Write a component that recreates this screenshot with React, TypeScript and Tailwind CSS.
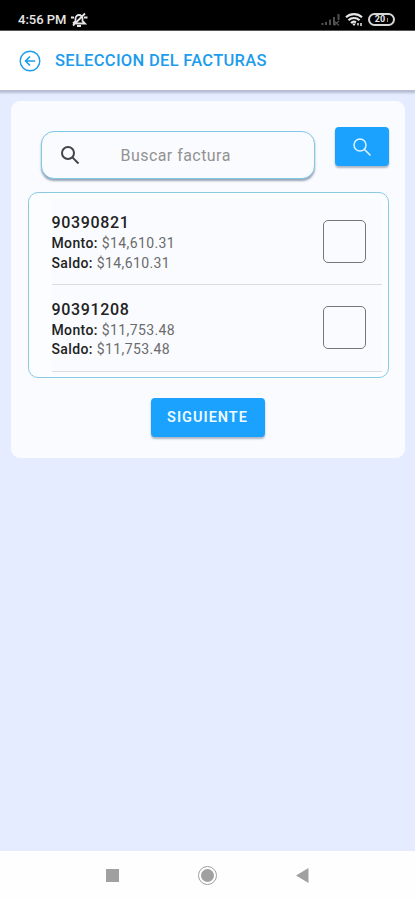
import { useState } from "react";

const invoices = [
  { id: "90390821", monto: "$14,610.31", saldo: "$14,610.31" },
  { id: "90391208", monto: "$11,753.48", saldo: "$11,753.48" },
];

function StatusBar() {
  return (
    <div className="flex h-[31px] shrink-0 items-center justify-between border-b border-[#555] bg-black pt-[9px] pr-[20px] pl-[18px] text-[#e6e6e6]">
      <div className="flex items-center gap-[3px]">
        <span className="text-[13px] leading-none font-medium whitespace-nowrap">4:56 PM</span>
        <svg width="18" height="16" viewBox="0 0 18 16" fill="none" stroke="currentColor" strokeWidth="1.8">
          <path d="M3 11.5 5.5 9V6.5a3.5 3.5 0 0 1 7 0V9l2.500 2.500H6" />
          <path d="M7 14h4M3 13.500 15 1.500M1 5.500h3M14 5.500h3.500" />
        </svg>
      </div>
      <div className="flex items-center">
        <svg width="19" height="14" viewBox="0 0 19 14" fill="none" stroke="#505050" strokeWidth="2">
          <path d="M1.5 10v2M5 9v3M9 6.5V12M13 4v8M17.5 1v6" />
          <path d="m13 8 5 4.5m0-4.5-5 4.5" strokeWidth="1.3" />
        </svg>
        <svg className="ml-[5px]" width="18" height="15" viewBox="0 0 18 15" fill="none" stroke="currentColor" strokeWidth="2.2">
          <path d="M1 5.2a12 12 0 0 1 16 0M3.5 8.2a8 8 0 0 1 11 0M6 11a4.5 4.5 0 0 1 5-.8" />
          <path d="m9 14-2-2.5h4z" fill="currentColor" stroke="none" />
          <path d="M13 13.5V11M16 11v3" strokeWidth="1.5" />
        </svg>
        <div className="ml-[5px] flex h-[13px] w-[27px] items-center justify-center rounded-full border-2 border-[#d6d6d6]">
          <span className="pr-[2px] text-[9px] leading-none font-bold">20</span>
          <span className="h-[4px] w-px bg-[#8a8a8a]" />
        </div>
      </div>
    </div>
  );
}

function SearchIcon({ className }: { className?: string }) {
  return (
    <svg className={className} width="20" height="20" viewBox="0 0 20 20" fill="none" stroke="currentColor">
      <circle cx="8" cy="8" r="6" />
      <path d="m12.4 12.4 6.1 6.1" />
    </svg>
  );
}

export default function App() {
  const [query, setQuery] = useState("");
  const [selected, setSelected] = useState<string[]>([]);

  const toggle = (id: string) => {
    setSelected((prev) =>
      prev.includes(id) ? prev.filter((item) => item !== id) : [...prev, id]
    );
  };

  return (
    <div className="flex h-[900px] w-[415px] flex-col overflow-hidden bg-[#e5ecff] font-[Roboto,sans-serif]">
      <StatusBar />

      <header className="flex h-[59px] shrink-0 items-center bg-white pl-[19px] text-[#1c9cee] shadow-[0_2px_2px_1px_rgba(110,120,145,0.4)]">
        <svg width="22" height="22" viewBox="0 0 22 22" fill="none" stroke="currentColor" strokeWidth="1.4" strokeLinecap="round" strokeLinejoin="round">
          <circle cx="11" cy="11" r="9.8" />
          <path d="M10.5 7 6.5 11l4 4M6.7 11h8.8" strokeWidth="1.7" />
        </svg>
        <h1 className="ml-[14px] pt-[2px] text-[16.5px] font-medium tracking-[0.3px] whitespace-nowrap">
          SELECCION DEL FACTURAS
        </h1>
      </header>

      <main className="flex-1 px-[10.5px] pt-[11px]">
        <div className="flex h-[357px] flex-col rounded-[9px] bg-[#fafbff] pr-[16px] pl-[17px]">
          <div className="flex justify-between pt-[26px] pl-[13px]">
            <label className="mt-[4px] flex h-[48px] w-[274px] items-center rounded-[13px] border border-[#80c8e4] bg-[#fafbff] pl-[18px] shadow-[0_2px_2px_rgba(75,95,130,0.55)]">
              <SearchIcon className="stroke-2 text-[#444]" />
              <input
                type="text"
                value={query}
                onChange={(e) => setQuery(e.target.value)}
                placeholder="Buscar factura"
                className="ml-[41px] w-[150px] pt-px text-[16px] tracking-[0.45px] text-[#444] outline-none placeholder:text-[#929292]"
              />
            </label>
            <button
              type="button"
              aria-label="Buscar"
              className="flex h-[39px] w-[54px] items-center justify-center rounded-[4px] bg-[#1ba2ff] text-[#def3ff] shadow-[0_2px_2px_rgba(60,80,110,0.4)]"
            >
              <SearchIcon className="stroke-[1.5]" />
            </button>
          </div>

          <div className="mt-[13px] h-[186px] shrink-0 rounded-[10px] border border-[#8acae5] bg-[#fcfdff] pt-[5.5px] pr-[6px] pl-[23px]">
            {invoices.map((invoice) => (
              <div
                key={invoice.id}
                className="flex h-[86.5px] items-center justify-between border-b border-[#dcdde0] bg-[#fafbff] pr-[16px]"
              >
                <div className="pt-[4px] text-[14px] leading-[19.5px] tracking-[0.38px] whitespace-nowrap text-[#6b6b6b]">
                  <h2 className="mb-px text-[16px] leading-[20px] font-medium tracking-[0.65px] text-[#222]">
                    {invoice.id}
                  </h2>
                  <p>
                    <b className="font-medium text-[#222]">Monto:</b> {invoice.monto}
                  </p>
                  <p>
                    <b className="font-medium text-[#222]">Saldo:</b> {invoice.saldo}
                  </p>
                </div>
                <input
                  type="checkbox"
                  checked={selected.includes(invoice.id)}
                  onChange={() => toggle(invoice.id)}
                  className="size-[43px] appearance-none rounded-[5px] border-[1.5px] border-[#777] checked:bg-[#1ba2ff]"
                />
              </div>
            ))}
          </div>

          <button
            type="button"
            className="mt-[20px] ml-[-1px] h-[39px] w-[114px] self-center rounded-[4px] bg-[#1ba2ff] text-[14.5px] font-semibold tracking-[1px] text-[#eefaff] shadow-[0_2px_2px_rgba(60,80,110,0.4)]"
          >
            SIGUIENTE
          </button>
        </div>
      </main>

      <nav className="flex h-[49px] shrink-0 items-center bg-[#fefefe] pl-[106px] text-[#a0a0a0]">
        <span className="size-[13px] bg-current" />
        <span className="ml-[79px] flex size-[19px] items-center justify-center rounded-full border-[1.5px] border-current">
          <span className="size-[13px] rounded-full bg-current" />
        </span>
        <svg className="ml-[79px]" width="13" height="15" viewBox="0 0 13 15" fill="currentColor">
          <path d="M0 7.5 12.5 0v15z" />
        </svg>
      </nav>
    </div>
  );
}
